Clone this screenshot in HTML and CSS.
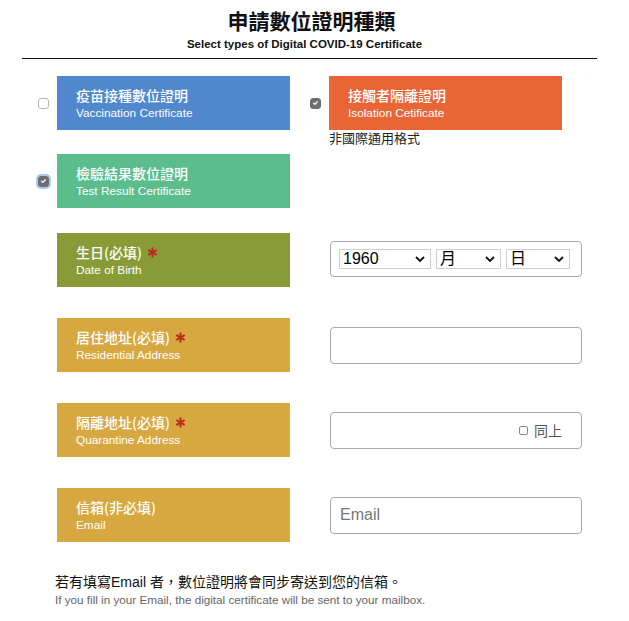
FILE: index.html
```html
<!DOCTYPE html>
<html lang="zh-Hant">
<head>
<meta charset="utf-8">
<title>申請數位證明種類</title>
<link rel="stylesheet" href="styles.css">
</head>
<body>
<div class="page">
  <header class="header">
    <h1 class="title">申請數位證明種類</h1>
    <p class="subtitle">Select types of Digital COVID-19 Certificate</p>
  </header>

  <section class="certs">
    <div class="cert-cell">
      <label class="cert-item">
        <span class="check"></span>
        <span class="box box-blue">
          <span class="box-title">疫苗接種數位證明</span>
          <span class="box-sub">Vaccination Certificate</span>
        </span>
      </label>
    </div>
    <div class="cert-cell">
      <label class="cert-item">
        <span class="check checked"><svg viewBox="0 0 12 12" width="12" height="12"><path d="M3.6 6.3 L5.2 7.8 L8.4 4.3" fill="none" stroke="#fff" stroke-width="1.6" stroke-linecap="round" stroke-linejoin="round"/></svg></span>
        <span class="box box-orange">
          <span class="box-title">接觸者隔離證明</span>
          <span class="box-sub">Isolation Cetificate</span>
        </span>
      </label>
      <p class="note">非國際通用格式</p>
    </div>
    <div class="cert-cell">
      <label class="cert-item">
        <span class="check checked focused"><svg viewBox="0 0 12 12" width="12" height="12"><path d="M3.6 6.3 L5.2 7.8 L8.4 4.3" fill="none" stroke="#fff" stroke-width="1.6" stroke-linecap="round" stroke-linejoin="round"/></svg></span>
        <span class="box box-green">
          <span class="box-title">檢驗結果數位證明</span>
          <span class="box-sub">Test Result Certificate</span>
        </span>
      </label>
    </div>
  </section>

  <section class="form">
    <div class="row">
      <div class="box box-olive">
        <span class="box-title">生日(必填)<svg class="req" viewBox="0 0 12 12" width="11" height="11"><g stroke="#bd2a1c" stroke-width="2.2" stroke-linecap="round"><path d="M6 1.5 V10.5"/><path d="M2.1 3.75 L9.9 8.25"/><path d="M2.1 8.25 L9.9 3.75"/></g></svg></span>
        <span class="box-sub">Date of Birth</span>
      </div>
      <div class="field date-field">
        <span class="sel sel-year">1960<svg class="chev" viewBox="0 0 10 6" width="10" height="6"><path d="M1 1 L5 5 L9 1" fill="none" stroke="#111" stroke-width="1.8"/></svg></span>
        <span class="sel sel-month">月<svg class="chev" viewBox="0 0 10 6" width="10" height="6"><path d="M1 1 L5 5 L9 1" fill="none" stroke="#111" stroke-width="1.8"/></svg></span>
        <span class="sel sel-day">日<svg class="chev" viewBox="0 0 10 6" width="10" height="6"><path d="M1 1 L5 5 L9 1" fill="none" stroke="#111" stroke-width="1.8"/></svg></span>
      </div>
    </div>

    <div class="row">
      <div class="box box-gold">
        <span class="box-title">居住地址(必填)<svg class="req" viewBox="0 0 12 12" width="11" height="11"><g stroke="#bd2a1c" stroke-width="2.2" stroke-linecap="round"><path d="M6 1.5 V10.5"/><path d="M2.1 3.75 L9.9 8.25"/><path d="M2.1 8.25 L9.9 3.75"/></g></svg></span>
        <span class="box-sub">Residential Address</span>
      </div>
      <div class="field"></div>
    </div>

    <div class="row">
      <div class="box box-gold">
        <span class="box-title">隔離地址(必填)<svg class="req" viewBox="0 0 12 12" width="11" height="11"><g stroke="#bd2a1c" stroke-width="2.2" stroke-linecap="round"><path d="M6 1.5 V10.5"/><path d="M2.1 3.75 L9.9 8.25"/><path d="M2.1 8.25 L9.9 3.75"/></g></svg></span>
        <span class="box-sub">Quarantine Address</span>
      </div>
      <div class="field same-field">
        <span class="small-check"></span><span class="same-text">同上</span>
      </div>
    </div>

    <div class="row">
      <div class="box box-gold">
        <span class="box-title">信箱(非必填)</span>
        <span class="box-sub">Email</span>
      </div>
      <div class="field email-field"><span class="placeholder">Email</span></div>
    </div>
  </section>

  <footer class="footer">
    <p class="foot-zh">若有填寫Email 者，數位證明將會同步寄送到您的信箱。</p>
    <p class="foot-en">If you fill in your Email, the digital certificate will be sent to your mailbox.</p>
  </footer>
</div>
</body>
</html>
```

FILE: styles.css
```css
html, body {
  margin: 0;
  padding: 0;
  background: #fff;
}

body {
  font-family: "Liberation Sans", "Noto Sans CJK TC", sans-serif;
  color: #111;
}

.page {
  width: 575px;
  margin-left: 22px;
}

.header {
  text-align: center;
  border-bottom: 1px solid #111;
  padding-top: 7px;
  padding-bottom: 7px;
}

.title {
  margin: 0;
  font-size: 21px;
  line-height: 26px;
  font-weight: 700;
  font-family: "Noto Sans CJK TC", "Liberation Sans", sans-serif;
  margin-left: 4px;
}

.subtitle {
  margin: 4px 0 0 0;
  font-size: 11.5px;
  line-height: 14px;
  font-weight: 700;
  margin-left: -10px;
}

.certs {
  display: grid;
  grid-template-columns: 272px 272px;
  row-gap: 8px;
  margin-top: 17px;
  align-items: start;
}

.cert-item {
  display: flex;
  align-items: center;
}

.check {
  width: 11px;
  height: 11px;
  margin-left: 16px;
  margin-right: 8px;
  border: 1px solid #b4b4b4;
  border-radius: 3px;
  box-sizing: border-box;
  background: #fff;
  display: flex;
  align-items: center;
  justify-content: center;
  flex: none;
}

.check.checked {
  background: #6e6e6e;
  border-color: #6e6e6e;
}

.check.focused {
  box-shadow: 0 0 0 2px #a9c9f2;
}

.check svg {
  width: 10px;
  height: 10px;
}

.box {
  display: flex;
  flex-direction: column;
  width: 233px;
  height: 54px;
  box-sizing: border-box;
  padding: 10px 19px 0 19px;
  color: #fff;
}

.box-title {
  display: flex;
  align-items: center;
  font-size: 14px;
  line-height: 18px;
  font-family: "Noto Sans CJK TC", "Liberation Sans", sans-serif;
  font-weight: 500;
}

.box-sub {
  font-size: 11.8px;
  line-height: 16px;
  margin-top: 1px;
}

.box-blue { background: #5087cd; }
.box-orange { background: #ea6535; }
.box-green { background: #5cbd8c; }
.box-olive { background: #899b36; }
.box-gold { background: #d8a840; }

.req {
  margin-left: 5px;
  margin-top: 1px;
}

.note {
  margin: 0 0 0 35px;
  font-size: 13px;
  line-height: 16px;
  font-family: "Noto Sans CJK TC", sans-serif;
  color: #222;
}

.form {
  margin-top: 25px;
  display: flex;
  flex-direction: column;
  gap: 31px;
}

.row {
  display: flex;
  align-items: center;
  padding-left: 35px;
}

.field {
  margin-left: 40px;
  width: 252px;
  height: 37px;
  box-sizing: border-box;
  border: 1px solid #aaa;
  border-radius: 4px;
  background: #fff;
}

.date-field {
  height: 36px;
  margin-top: -3px;
  display: flex;
  align-items: center;
  gap: 5px;
  padding-left: 8px;
}

.sel {
  position: relative;
  height: 20px;
  box-sizing: border-box;
  border: 1px solid #cfcfcf;
  font-size: 16px;
  line-height: 18px;
  padding-left: 3px;
  color: #000;
  font-family: "Liberation Sans", "Noto Sans CJK TC", sans-serif;
}

.sel-year { width: 92px; }
.sel-month { width: 65px; }
.sel-day { width: 64px; }

.chev {
  position: absolute;
  right: 5px;
  top: 6px;
}

.same-field {
  display: flex;
  align-items: center;
  justify-content: flex-end;
  padding-right: 19px;
}

.small-check {
  width: 9px;
  height: 9px;
  box-sizing: border-box;
  border: 1px solid #8a8a8a;
  border-radius: 2px;
  margin-right: 6px;
}

.same-text {
  font-size: 14px;
  font-family: "Noto Sans CJK TC", sans-serif;
  color: #555;
}

.email-field {
  display: flex;
  align-items: center;
  padding-left: 9px;
}

.placeholder {
  font-size: 16px;
  color: #777;
}

.footer {
  margin-top: 30px;
  padding-left: 33px;
}

.foot-zh {
  margin: 0;
  font-size: 14px;
  line-height: 20px;
  font-family: "Liberation Sans", "Noto Sans CJK TC", sans-serif;
  color: #111;
}

.foot-en {
  margin: 0;
  font-size: 11.7px;
  line-height: 16px;
  color: #666;
}
```
